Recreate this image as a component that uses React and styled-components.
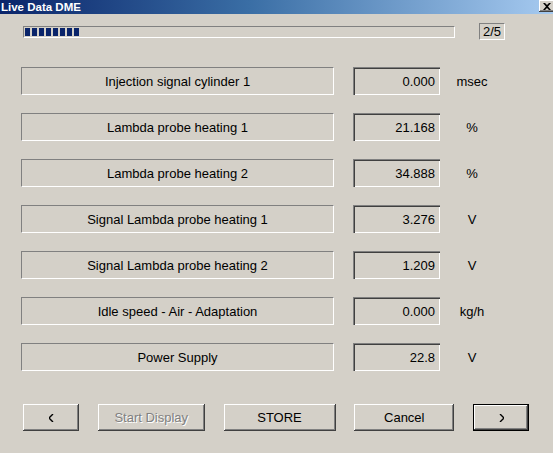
import React from "react";
import styled, { createGlobalStyle } from "styled-components";

const Global = createGlobalStyle`
  html, body { margin: 0; padding: 0; background: #d4d0c8; }
  body { font-family: "Liberation Sans", Arial, sans-serif; }
`;

const Window = styled.div`
  width: 553px;
  height: 453px;
  background: #d4d0c8;
  display: flex;
  flex-direction: column;
  overflow: hidden;
  position: relative;
`;

const TitleBar = styled.div`
  height: 14px;
  background: linear-gradient(to right, #0a246a 0%, #3a6ea5 45%, #a6caf0 100%);
  display: flex;
  align-items: center;
  justify-content: space-between;
  padding-left: 1px;
`;

const TitleText = styled.span`
  color: #fff;
  font-weight: bold;
  font-size: 11.5px;
  line-height: 14px;
  font-family: "Liberation Sans", Arial, sans-serif;
`;

const CloseBtn = styled.div`
  width: 16px;
  height: 12px;
  margin-right: -2px;
  align-self: flex-start;
  background: #d4d0c8;
  box-shadow: inset -1px -1px #404040, inset 1px 1px #fff, inset -2px -2px #808080;
  display: flex;
  align-items: center;
  justify-content: center;
`;

const ProgressRow = styled.div`
  display: flex;
  align-items: center;
  margin-top: 9px;
  padding-left: 23px;
  height: 17px;
`;

const ProgressTrack = styled.div`
  width: 432px;
  height: 12px;
  box-sizing: border-box;
  border-top: 1px solid #808080;
  border-left: 1px solid #808080;
  border-bottom: 1px solid #fff;
  border-right: 1px solid #fff;
  display: flex;
  gap: 2px;
  padding: 1px 1px;
`;

const Block = styled.div`
  width: 5px;
  height: 100%;
  background: #0a246a;
`;

const Counter = styled.div`
  margin-left: 24px;
  width: 26px;
  height: 17px;
  box-sizing: border-box;
  border-top: 1px solid #808080;
  border-left: 1px solid #808080;
  border-bottom: 1px solid #fff;
  border-right: 1px solid #fff;
  font-size: 13px;
  display: flex;
  align-items: center;
  justify-content: center;
  color: #000;
`;

const Rows = styled.div`
  display: flex;
  flex-direction: column;
  gap: 18px;
  margin-top: 27px;
  padding-left: 21px;
`;

const Row = styled.div`
  display: flex;
  align-items: center;
  height: 28px;
`;

const Label = styled.div`
  width: 313px;
  height: 28px;
  box-sizing: border-box;
  border-top: 1px solid #808080;
  border-left: 1px solid #808080;
  border-bottom: 1px solid #fff;
  border-right: 1px solid #fff;
  font-size: 13px;
  color: #000;
  display: flex;
  align-items: center;
  justify-content: center;
`;

const Value = styled.div`
  margin-left: 19px;
  width: 87px;
  height: 28px;
  box-sizing: border-box;
  box-shadow: inset 1px 1px #808080, inset 2px 2px #404040, inset -1px -1px #fff, inset -2px -2px #d4d0c8;
  font-size: 13px;
  color: #000;
  display: flex;
  align-items: center;
  justify-content: flex-end;
  padding-right: 5px;
`;

const Unit = styled.div`
  width: 64px;
  text-align: center;
  font-size: 13px;
  color: #000;
`;

const ButtonBar = styled.div`
  margin-top: 33px;
  margin-left: 23px;
  width: 506px;
  display: flex;
  justify-content: space-between;
`;

const Button = styled.div`
  width: ${(p) => p.$w}px;
  height: 27px;
  box-sizing: border-box;
  background: #d4d0c8;
  font-size: 13px;
  display: flex;
  align-items: center;
  justify-content: center;
  color: ${(p) => (p.$disabled ? "#808080" : "#000")};
  text-shadow: ${(p) => (p.$disabled ? "1px 1px 0 #fff" : "none")};
  border: ${(p) => (p.$default ? "1px solid #000" : "none")};
  box-shadow: inset -1px -1px #404040, inset 1px 1px #fff, inset -2px -2px #808080, inset 2px 2px #d4d0c8;
`;

const rows = [
  ["Injection signal cylinder 1", "0.000", "msec"],
  ["Lambda probe heating 1", "21.168", "%"],
  ["Lambda probe heating 2", "34.888", "%"],
  ["Signal Lambda probe heating 1", "3.276", "V"],
  ["Signal Lambda probe heating 2", "1.209", "V"],
  ["Idle speed - Air - Adaptation", "0.000", "kg/h"],
  ["Power Supply", "22.8", "V"],
];

export default function App() {
  return (
    <Window>
      <Global />
      <TitleBar>
        <TitleText>Live Data DME</TitleText>
        <CloseBtn>
          <svg width="8" height="7" viewBox="0 0 8 7">
            <path d="M0 0 L2 0 L4 2 L6 0 L8 0 L5 3.5 L8 7 L6 7 L4 5 L2 7 L0 7 L3 3.5 Z" fill="#000" />
          </svg>
        </CloseBtn>
      </TitleBar>
      <ProgressRow>
        <ProgressTrack>
          {Array.from({ length: 8 }).map((_, i) => (
            <Block key={i} />
          ))}
        </ProgressTrack>
        <Counter>2/5</Counter>
      </ProgressRow>
      <Rows>
        {rows.map(([l, v, u]) => (
          <Row key={l}>
            <Label>{l}</Label>
            <Value>{v}</Value>
            <Unit>{u}</Unit>
          </Row>
        ))}
      </Rows>
      <ButtonBar>
        <Button $w={56}>
          <svg width="5" height="8" viewBox="0 0 5 8"><path d="M4 0 L0 4 L4 8" stroke="#000" strokeWidth="1.4" fill="none" /></svg>
        </Button>
        <Button $w={107} $disabled>Start Display</Button>
        <Button $w={112}>STORE</Button>
        <Button $w={100}>Cancel</Button>
        <Button $w={56} $default>
          <svg width="5" height="8" viewBox="0 0 5 8"><path d="M1 0 L5 4 L1 8" stroke="#000" strokeWidth="1.4" fill="none" /></svg>
        </Button>
      </ButtonBar>
    </Window>
  );
}
